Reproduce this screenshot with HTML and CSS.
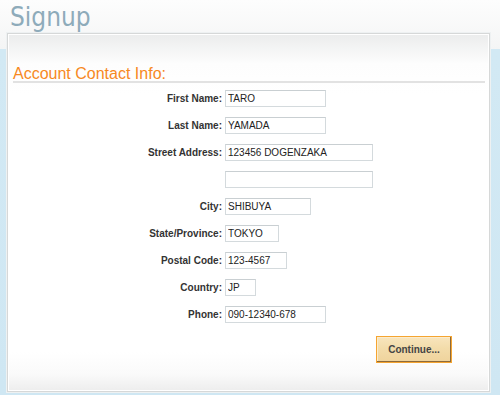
FILE: index.html
```html
<!DOCTYPE html>
<html lang="en">
  <head>
    <meta charset="utf-8">
    <title>Signup</title>
    <link rel="stylesheet" href="styles.css">
  </head>
  <body>

  <h1 class="page-title">Signup</h1>

  <div class="panel">
    <h2 class="section-title">Account Contact Info:</h2>

    <form class="signup-form">
      <label class="field-label">First Name:</label>
      <input class="field w-name" type="text" value="TARO">

      <label class="field-label">Last Name:</label>
      <input class="field w-name" type="text" value="YAMADA">

      <label class="field-label">Street Address:</label>
      <input class="field w-street" type="text" value="123456 DOGENZAKA">

      <label class="field-label"></label>
      <input class="field w-street" type="text" value="">

      <label class="field-label">City:</label>
      <input class="field w-city" type="text" value="SHIBUYA">

      <label class="field-label">State/Province:</label>
      <input class="field w-state" type="text" value="TOKYO">

      <label class="field-label">Postal Code:</label>
      <input class="field w-postal" type="text" value="123-4567">

      <label class="field-label">Country:</label>
      <input class="field w-country" type="text" value="JP">

      <label class="field-label">Phone:</label>
      <input class="field w-name" type="text" value="090-12340-678">
    </form>

    <div class="actions">
      <button class="continue" type="button">Continue...</button>
    </div>
  </div>

  </body>
</html>
```

FILE: styles.css
```css
html {
  height: 100%;
}
body {
  margin: 0;
  padding: 0;
  height: 100%;
  font-family: "Liberation Sans", Arial, sans-serif;
  color: #333;
  background:
    linear-gradient(to bottom, #fdfdfd 0, #f4f5f5 49px, #d2e9f4 49px, #cfe7f3 100%);
}

.page-title {
  margin: 0;
  height: 33px;
  padding-left: 10px;
  font-family: "DejaVu Sans Condensed", sans-serif;
  font-weight: normal;
  font-size: 26px;
  line-height: 35px;
  color: #8eabba;
}

.panel {
  margin: 0 10px 0 7px;
  height: 357px;
  border: 1px solid #d6d8d8;
  box-shadow: 0 0 0 1px #eef1f2, inset 0 0 0 1px #fff;
  background:
    linear-gradient(to bottom, #ebecec 0, #fdfdfd 30px, #fff 60px, #fff 318px, #fafafa 340px, #ededed 100%);
}

.section-title {
  margin: 31px 4px 0 5px;
  height: 16px;
  border-bottom: 2px solid #e2e2e2;
  font-size: 16px;
  line-height: 17px;
  font-weight: normal;
  color: #f7891e;
}

.signup-form {
  display: grid;
  grid-template-columns: 214px 1fr;
  column-gap: 3px;
  row-gap: 10px;
  margin-top: 7px;
  align-items: center;
}

.field-label {
  text-align: right;
  font-size: 10px;
  font-weight: bold;
  color: #333;
}

.field {
  box-sizing: border-box;
  height: 17px;
  margin: 0;
  padding: 0 2px;
  border: 1px solid #d4dadd;
  border-top-color: #c9cfd2;
  background: #fff;
  font-family: "Liberation Sans", Arial, sans-serif;
  font-size: 10px;
  color: #222;
}

.w-name { width: 101px; }
.w-street { width: 148px; }
.w-city { width: 86px; }
.w-state { width: 54px; }
.w-postal { width: 62px; }
.w-country { width: 31px; }

.actions {
  display: flex;
  justify-content: flex-end;
  padding-right: 37px;
  margin-top: 13px;
}

.continue {
  width: 76px;
  height: 27px;
  padding: 0;
  border: 1px solid #f5a531;
  box-shadow: inset -1px -1px 0 #8d6a3b, inset 1px 1px 0 #fbeccd;
  background: linear-gradient(to bottom, #f8e5bd 0, #f3dcaa 45%, #efd39c 100%);
  font-family: "Liberation Sans", Arial, sans-serif;
  font-size: 10px;
  font-weight: bold;
  color: #444;
  cursor: pointer;
}
```
